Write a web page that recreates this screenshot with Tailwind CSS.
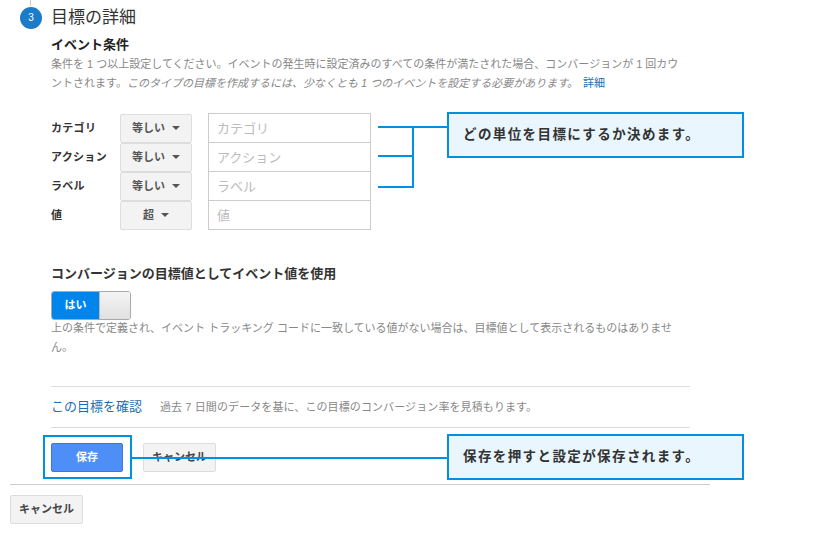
<!DOCTYPE html>
<html lang="ja">
<head>
  <meta charset="UTF-8" />
  <title>目標の詳細</title>
  <script src="https://cdn.jsdelivr.net/npm/@tailwindcss/browser@4"></script>
</head>
<body class="bg-white w-[813px] h-[546px] overflow-hidden relative font-['Liberation_Sans','Noto_Sans_CJK_JP',sans-serif] text-[#333]">
  <div class="pl-[10px] w-[710px]">
    <!-- step header -->
    <div class="relative flex items-center h-[29px] pt-[6px] pl-[10px]">
      <div class="absolute left-[20px] top-0 w-px h-[6px] bg-[#ccc]"></div>
      <div class="w-[22px] h-[22px] rounded-full bg-[#1c7cc9] text-white text-[10px] flex items-center justify-center">3</div>
      <h2 class="ml-[9px] text-[17px] leading-[22px] font-normal text-[#333]">目標の詳細</h2>
    </div>

    <div class="pl-[41px] pr-[20px]">
      <h3 class="mt-[7px] text-[13px] leading-[18px] font-bold text-[#222]">イベント条件</h3>
      <p class="mt-[1px] text-[11px] leading-[19px] text-[#888] w-[632px]">条件を 1 つ以上設定してください。イベントの発生時に設定済みのすべての条件が満たされた場合、コンバージョンが 1 回カウントされます。<em>このタイプの目標を作成するには、少なくとも 1 つのイベントを設定する必要があります。</em> <a class="ml-[2px] text-[#1c6fb0]">詳細</a></p>

      <!-- conditions -->
      <div class="mt-[21px] flex flex-col gap-px">
        <div class="flex items-center h-[28px]">
          <span class="w-[69px] text-[11px] tracking-[0.3px] font-bold text-[#333]">カテゴリ</span>
          <button class="w-[72px] h-[29px] border border-[#ddd] rounded-[2px] bg-[#f3f3f3] text-[11px] font-bold text-[#555] flex items-center justify-center gap-[7px]">等しい<span class="w-0 h-0 border-x-[4px] border-x-transparent border-t-[4px] border-t-[#555]"></span></button>
          <div class="ml-[16px] w-[163px] h-[30px] border border-[#ccc] px-[8px] text-[13px] leading-[29px] text-[#bbb]">カテゴリ</div>
        </div>
        <div class="flex items-center h-[28px]">
          <span class="w-[69px] text-[11px] tracking-[0.3px] font-bold text-[#333]">アクション</span>
          <button class="w-[72px] h-[29px] border border-[#ddd] rounded-[2px] bg-[#f3f3f3] text-[11px] font-bold text-[#555] flex items-center justify-center gap-[7px]">等しい<span class="w-0 h-0 border-x-[4px] border-x-transparent border-t-[4px] border-t-[#555]"></span></button>
          <div class="ml-[16px] w-[163px] h-[30px] border border-[#ccc] px-[8px] text-[13px] leading-[29px] text-[#bbb]">アクション</div>
        </div>
        <div class="flex items-center h-[28px]">
          <span class="w-[69px] text-[11px] tracking-[0.3px] font-bold text-[#333]">ラベル</span>
          <button class="w-[72px] h-[29px] border border-[#ddd] rounded-[2px] bg-[#f3f3f3] text-[11px] font-bold text-[#555] flex items-center justify-center gap-[7px]">等しい<span class="w-0 h-0 border-x-[4px] border-x-transparent border-t-[4px] border-t-[#555]"></span></button>
          <div class="ml-[16px] w-[163px] h-[30px] border border-[#ccc] px-[8px] text-[13px] leading-[29px] text-[#bbb]">ラベル</div>
        </div>
        <div class="flex items-center h-[28px]">
          <span class="w-[69px] text-[11px] tracking-[0.3px] font-bold text-[#333]">値</span>
          <button class="w-[72px] h-[29px] border border-[#ddd] rounded-[2px] bg-[#f3f3f3] text-[11px] font-bold text-[#555] flex items-center justify-center gap-[7px]">超<span class="w-0 h-0 border-x-[4px] border-x-transparent border-t-[4px] border-t-[#555]"></span></button>
          <div class="ml-[16px] w-[163px] h-[30px] border border-[#ccc] px-[8px] text-[13px] leading-[29px] text-[#bbb]">値</div>
        </div>
      </div>

      <!-- event value -->
      <h3 class="mt-[36px] text-[13px] leading-[18px] font-bold text-[#333]">コンバージョンの目標値としてイベント値を使用</h3>
      <div class="mt-[8px] flex w-[80px] h-[29px] rounded-[3px] overflow-hidden border border-[#aaa]">
        <div class="w-[47px] bg-[#0085ec] text-white text-[11px] font-bold flex items-center justify-center">はい</div>
        <div class="flex-1 bg-gradient-to-b from-[#f4f4f4] to-[#e0e0e0] border-l border-[#bbb]"></div>
      </div>
      <p class="mt-[-1px] text-[11px] leading-[19px] text-[#888] w-[640px]">上の条件で定義され、イベント トラッキング コードに一致している値がない場合は、目標値として表示されるものはありません。</p>

      <!-- verify -->
      <div class="mt-[29px] w-[639px] h-[42px] border-y border-[#ddd] flex items-center">
        <a class="text-[13px] text-[#1c6fb0]">この目標を確認</a>
        <span class="ml-[18px] text-[11px] tracking-[0.1px] text-[#888]">過去 7 日間のデータを基に、この目標のコンバージョン率を見積もります。</span>
      </div>

      <div class="mt-[15px] flex gap-[20px]">
        <button class="w-[72px] h-[29px] rounded-[2px] border border-[#3a78e0] bg-[#4d8ef7] text-white text-[11px] font-bold">保存</button>
        <button class="w-[73px] h-[29px] rounded-[2px] border border-[#ddd] bg-[#f3f3f3] text-[#444] text-[11px] font-bold">キャンセル</button>
      </div>
    </div>

    <div class="mt-[12px] border-t border-[#ccc] pt-[10px]">
      <button class="w-[73px] h-[29px] rounded-[2px] border border-[#ddd] bg-[#f3f3f3] text-[#444] text-[11px] font-bold">キャンセル</button>
    </div>
  </div>

  <!-- annotations drawn over the page -->
  <div class="absolute left-[378px] top-[126px] w-[69px] h-[2px] bg-[#0090e0]"></div>
  <div class="absolute left-[378px] top-[155px] w-[36px] h-[2px] bg-[#0090e0]"></div>
  <div class="absolute left-[378px] top-[186px] w-[36px] h-[2px] bg-[#0090e0]"></div>
  <div class="absolute left-[412px] top-[126px] w-[2px] h-[62px] bg-[#0090e0]"></div>
  <div class="absolute left-[447px] top-[112px] w-[297px] h-[46px] border-2 border-[#0090e0] bg-[#e9f6fe] pl-[14px] flex items-center text-[13.5px] tracking-[1.4px] font-bold text-[#333]">どの単位を目標にするか決めます。</div>

  <div class="absolute left-[43px] top-[435px] w-[89px] h-[44px] border-2 border-[#0090e0]"></div>
  <div class="absolute left-[132px] top-[457px] w-[315px] h-[2px] bg-[#0090e0]"></div>
  <div class="absolute left-[447px] top-[434px] w-[297px] h-[46px] border-2 border-[#0090e0] bg-[#e9f6fe] pl-[14px] flex items-center text-[13.5px] tracking-[1.4px] font-bold text-[#333]">保存を押すと設定が保存されます。</div>
</body>
</html>
